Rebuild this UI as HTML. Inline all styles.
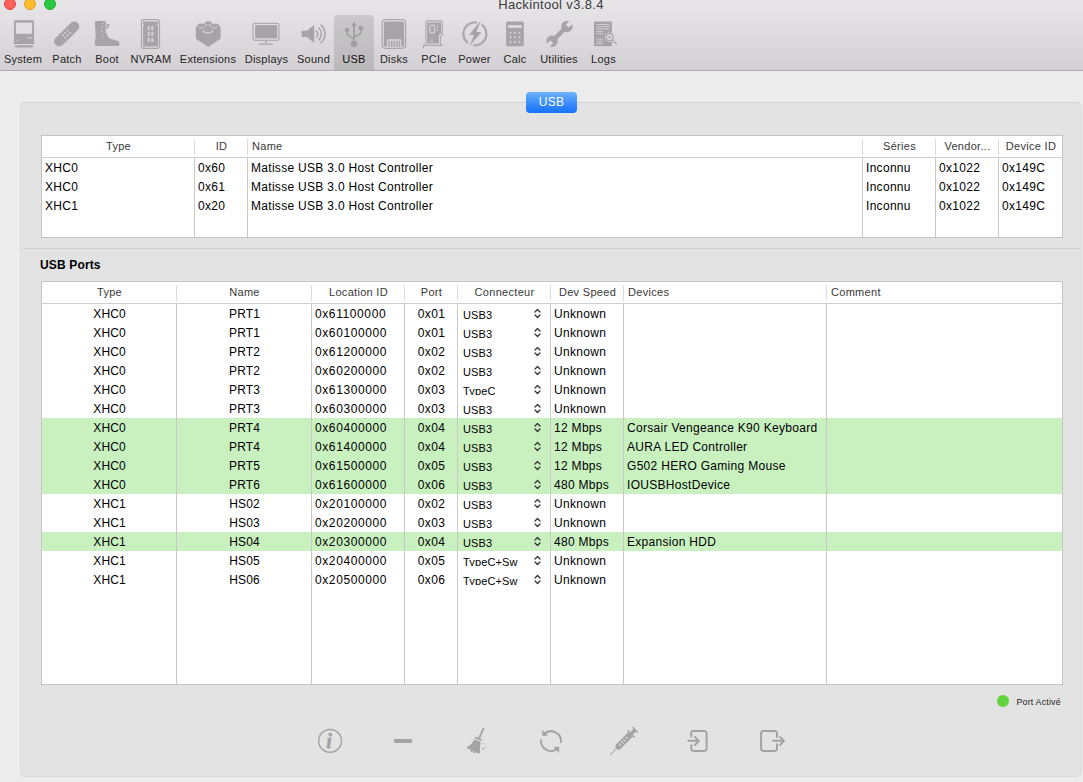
<!DOCTYPE html>
<html lang="fr"><head><meta charset="utf-8"><title>Hackintool v3.8.4</title>
<style>
html,body{margin:0;padding:0}
body{width:1083px;height:782px;overflow:hidden;background:#ececec;font-family:"Liberation Sans",sans-serif;position:relative;color:#000}
#toolbar{position:absolute;left:0;top:0;width:1083px;height:70px;background:linear-gradient(#e8e6e8,#d2d0d2);border-bottom:1px solid #acaaac}
.tl{position:absolute;top:-2px;width:12px;height:12px;border-radius:50%;box-sizing:border-box;border:0.5px solid}
#title{position:absolute;left:0;width:1102px;top:-3px;text-align:center;font-size:13px;line-height:16px;color:#3c3b3c;letter-spacing:0.35px}
.ti{position:absolute;top:15px;height:55px}
.ti svg{position:absolute;top:3px;left:50%;margin-left:-16px}
.tx{position:absolute;top:52px;width:80px;margin-left:-40px;text-align:center;font-size:11px;line-height:14px;color:#262526;letter-spacing:0.25px;white-space:nowrap}
.ti.sel{background:rgba(0,0,0,0.11);border-radius:4px 4px 0 0}
#box{position:absolute;left:20px;top:102px;width:1060px;height:673px;background:#e3e3e3;border:1px solid #dbdbdb;border-top-color:#d3d3d3;border-radius:5px}
#tab{position:absolute;left:526px;top:92px;width:51px;height:21px;border-radius:4px;background:linear-gradient(#6db2fb,#3d8ffa 50%,#1671fa);color:#fff;font-size:12px;line-height:20px;text-align:center;letter-spacing:0.2px}
.tbl{position:absolute;left:41px;width:1020px;background:#fff;border:1px solid #c4c4c4;overflow:hidden}
#t1{top:135px;height:101px}
#t2{top:281px;height:402px}
.hdr{position:absolute;left:0;top:0;width:100%;height:21px;border-bottom:1px solid #cfcfcf;background:#fff}
#t2 .hdr{height:21px}
.hc{position:absolute;top:0;height:21px;line-height:21px;font-size:11px;letter-spacing:0.3px;color:#383838;box-sizing:border-box}
.hc.hctr{text-align:center}
.hc.hlft{text-align:left;padding-left:4px}
.vl{position:absolute;top:22px;bottom:0;width:1px;background:#c8c8c8}
.hv{position:absolute;top:3px;height:16px;width:1px;background:#dcdcdc}
.row{position:absolute;left:0;width:100%;height:19px}
.row.g{background:#c9f1c0}
.c{position:absolute;top:1px;height:19px;line-height:19px;font-size:12px;letter-spacing:0.3px;white-space:nowrap;overflow:hidden}
.c.ctr{text-align:center;letter-spacing:0.1px}
.c.loc{letter-spacing:0.6px}
.c.prt{letter-spacing:0.35px}
.c.pop{font-size:11px;top:4px;height:11.3px;line-height:14px;letter-spacing:0.15px}
.chev{position:absolute;top:4px}
#sep{position:absolute;left:23px;top:248px;width:1057px;height:1px;background:#d0d0d0}
#lbl{position:absolute;left:40px;top:258px;font-size:12px;font-weight:bold;line-height:15px;letter-spacing:0.15px}
#legend{position:absolute;left:997px;top:695px;height:12px}
#legend .dot{position:absolute;left:0;top:0;width:12px;height:12px;border-radius:50%;background:#63d53c}
#legend .lt{position:absolute;left:19.5px;top:0.5px;font-size:8.8px;line-height:13px;white-space:nowrap;color:#222;letter-spacing:0.2px}
.bi{position:absolute}
</style></head>
<body>
<div id="toolbar">
<div class="tl" style="left:4px;background:#fd605a;border-color:#e2463f"></div><div class="tl" style="left:24px;background:#febc2e;border-color:#dfa123"></div><div class="tl" style="left:44px;background:#29c840;border-color:#1dad2b"></div>
<div id="title">Hackintool v3.8.4</div>
<div class="ti sel" style="left:334px;width:40px"></div>
<svg id="tbi" width="1083" height="70" viewBox="0 0 1083 70" style="position:absolute;left:0;top:0">
<defs>
<mask id="mw" maskUnits="userSpaceOnUse" x="540" y="15" width="40" height="40"><rect x="540" y="15" width="40" height="40" fill="#fff"/><g transform="rotate(-45 559.5 33.9)"><rect x="570.500" y="31.800" width="8" height="4.200" fill="#000"/><rect x="540.500" y="31.800" width="8" height="4.200" fill="#000"/></g></mask>
</defs>
<g fill="#a6a4a6" stroke="none">
<!-- System -->
<path fill-rule="evenodd" d="M15.5 20.2h17a1.5 1.5 0 0 1 1.5 1.5v22.3h-20v-22.3a1.5 1.5 0 0 1 1.5-1.5zM15.9 22.8v10.8h16.2v-10.8z"/>
<rect x="15.9" y="22.8" width="16.2" height="10.8" fill="#e1dfe1"/>
<rect x="27.4" y="37" width="4.3" height="1.7" fill="#c9c7c9"/><rect x="16.3" y="39.5" width="1.8" height="1.5" fill="#c9c7c9"/>
<rect x="15" y="45.2" width="18" height="2.3" rx="1"/>
<!-- Patch -->
<rect x="51" y="29" width="31.400" height="10" rx="5" transform="rotate(-45 66.700 34)"/>
<g fill="#dddbdd"><rect x="66.900" y="29.700" width="1.600" height="1.600"/><rect x="64.500" y="32.100" width="1.600" height="1.600"/><rect x="69.300" y="32.100" width="1.600" height="1.600"/><rect x="62.100" y="34.500" width="1.600" height="1.600"/><rect x="66.900" y="34.500" width="1.600" height="1.600"/><rect x="64.500" y="36.900" width="1.600" height="1.600"/></g>
<!-- Boot -->
<path d="M94.800 21.200q5.500-1 10.900 0l.2 2.800l-.5 5.800q.4 3.200 2.500 6.700q.9 1.700 2.300 2.300l4.900 1.300l2.700 .9q1.600 .8 1.600 2.500v1.500q-.2 .9-1.400 .9h-22q-1.100 0-1.100-1.300v-4.300q.1-1.300 .8-2l-.4-9.900z"/>
<path d="M106.800 23.700l2.900 .7q-.2 1-.9 1.800q-1.200 1.400-2 3.100l-.7-.9q.9-2.400 .7-4.700z"/>
<g fill="#cfcdcf"><rect x="102" y="23" width="1.600" height="1"/><rect x="101.400" y="25.900" width="1.500" height="1"/><rect x="101" y="28.400" width="1.500" height="1"/><rect x="101.100" y="31" width="1.500" height="1"/><rect x="101.700" y="33.500" width="1.300" height="1.100"/><rect x="102.800" y="36.200" width="1.200" height="1.100"/></g>
<!-- NVRAM -->
<rect x="141.5" y="19.6" width="18" height="28.7" rx="2.2" fill="none" stroke="#a9a7a9" stroke-width="1.2"/>
<path d="M143 21.600h15.200v2.200l-1.100 1.200l1 1.400v20.200h-15v-20.200l1-1.400l-1.100-1.200z"/>
<g fill="#d6d4d6"><rect x="147.700" y="26.200" width="2" height="4.200"/><rect x="151.300" y="26.200" width="2" height="4.200"/><rect x="147.700" y="32" width="2" height="3.800"/><rect x="151.300" y="32" width="2" height="3.800"/><rect x="147.700" y="37.800" width="2" height="4.200"/><rect x="151.300" y="37.800" width="2" height="4.200"/></g>
<!-- Extensions -->
<path d="M195.800 27.400q0-1 1.600-1.600q0-2.400 3.800-2.400q1.600 0 2.600 .5q.2-.4 .8-.6q0-2.100 3.600-2.100q3.600 0 3.600 2.100q.6 .2 .8 .6q1-.5 2.600-.5q3.800 0 3.800 2.400q1.600 .6 1.600 1.600v11.400l-12.400 8.200l-12.400-8.200z"/>
<g fill="none" stroke="#d6d4d6" stroke-width=".9"><path d="M197.700 26.200a3.500 1.700 0 0 0 7 0"/><path d="M210.700 26.200a3.500 1.700 0 0 0 7 0"/><path d="M204.800 23.700a3.400 1.600 0 0 0 6.800 0"/><path d="M203.300 30.300a4.600 2.700 0 0 0 9.200 0" stroke-width="1.200" stroke="#dad8da"/></g>
<!-- Displays -->
<rect x="253" y="23.300" width="26" height="17" rx="2" fill="none" stroke="#b1afb1" stroke-width="1.300"/>
<rect x="255.200" y="25.100" width="22" height="13.200"/>
<rect x="265" y="40.800" width="2" height="3.200" fill="#b1afb1"/><rect x="259.200" y="43.600" width="13.600" height="1.300" rx=".5" fill="#b1afb1"/>
<!-- Sound -->
<path d="M302.200 30.800h4.800l6.600-5.600q.6-.4.600.4v16.600q0 .8-.6.400l-6.600-5.600h-4.800q-.5 0-.5-.5v-5.200q0-.5.500-.5z"/>
<g fill="none" stroke="#a9a7a9" stroke-width="1.600" stroke-linecap="round"><path d="M316.300 30.800a4 4 0 0 1 0 6.200"/><path d="M318.700 28a7.800 7.800 0 0 1 0 11.800"/><path d="M321 25.200a11.500 11.500 0 0 1 0 17.400"/></g>
<!-- USB -->
<g fill="#a19fa1"><path d="M354 21.700l2.800 4.200h-1.900v14.500a3.500 3.500 0 1 1-1.800 0v-14.500h-1.900z"/><circle cx="347" cy="30" r="2.200"/><rect x="358.700" y="26" width="4.200" height="4.200"/></g>
<g fill="none" stroke="#a19fa1" stroke-width="1.600"><path d="M347.200 31v3.500l6.800 4.700"/><path d="M360.800 30v3l-6.800 4.500"/></g>
<!-- Disks -->
<rect x="382.200" y="19.700" width="23.400" height="28.600" rx="3.200" fill="none" stroke="#a9a7a9" stroke-width="1.200"/>
<path fill-rule="evenodd" d="M385.400 21.500h17.200a1.500 1.500 0 0 1 1.500 1.500v22.100a1.500 1.500 0 0 1-1.500 1.500h-17.200a1.500 1.500 0 0 1-1.500-1.500v-22.100a1.500 1.500 0 0 1 1.500-1.500z"/>
<path d="M387 46.600v-6.300a1 1 0 0 1 1-1h12.200a1 1 0 0 1 1 1v6.300z" fill="#d8d6d8"/>
<g><rect x="388.400" y="40.600" width="1.500" height="6"/><rect x="391" y="40.600" width="1.500" height="6"/><rect x="393.600" y="40.600" width="1.500" height="6"/><rect x="396.200" y="40.600" width="1.500" height="6"/><rect x="398.800" y="40.600" width="1.300" height="6"/></g>
<!-- PCIe -->
<path d="M425.900 45.400v-22.500a2 2 0 0 1 2-2h12.400a2 2 0 0 1 2 2v11.900q0 1.500-1.400 1.500q-.5 0-.5 1.100v8" fill="none" stroke="#a9a7a9" stroke-width="1.100"/>
<path d="M423.500 48.300v-2.100q0-.8 .8-.8h18.600" fill="none" stroke="#a9a7a9" stroke-width="1.100"/>
<path d="M428 22.600h12.300a.8 .8 0 0 1 .8 .8v10q0 .8-.8 .8q-1.500 0-1.500 1.700v7.700h-11.600v-20.200a.8 .8 0 0 1 .8-.8z"/>
<rect x="429.900" y="25.400" width="4.600" height="7.800" rx="1" fill="none" stroke="#d6d4d6" stroke-width="1.200"/>
<g fill="#d0ced0"><rect x="436.200" y="24.900" width="2" height=".9"/><rect x="436.200" y="27" width="2" height=".9"/><rect x="436.400" y="29.400" width="1.500" height="1.300"/><rect x="429.800" y="37.900" width="3" height=".9" fill="#bebcbe"/><rect x="429.800" y="40.700" width="3.200" height="1"/></g>
<!-- Power -->
<g fill="none" stroke="#a9a7a9" stroke-width="2.200"><path d="M481.800 24.700a11.500 11.500 0 0 1-8.500 20.600"/><path d="M468 43.100a11.500 11.500 0 0 1 8.700-20.600"/></g>
<path d="M480.800 20.600l-11.800 14.300h5.100l-4.800 11.700l12.100-14.600h-5z"/>
<!-- Calc -->
<rect x="506.100" y="21.600" width="17.700" height="24.600" rx="1.500"/>
<rect x="508.200" y="25.100" width="13.500" height="2.800" fill="#dcdadc"/>
<g fill="#d6d4d6"><rect x="509.600" y="32" width="1.800" height="1.800"/><rect x="514.100" y="32" width="1.800" height="1.800"/><rect x="518.600" y="32" width="1.800" height="1.800"/><rect x="509.600" y="36.400" width="1.800" height="1.800"/><rect x="514.100" y="36.400" width="1.800" height="1.800"/><rect x="518.600" y="36.400" width="1.800" height="1.800"/><rect x="509.600" y="40.900" width="1.800" height="1.800"/><rect x="514.100" y="40.900" width="1.800" height="1.800"/><rect x="518.600" y="40.900" width="1.800" height="1.800"/></g>
<!-- Utilities -->
<g mask="url(#mw)"><g transform="rotate(-45 559.500 33.900)"><rect x="549" y="31.700" width="21" height="4.400"/><circle cx="570" cy="33.900" r="5.700"/><circle cx="549" cy="33.900" r="5.700"/></g></g>
<!-- Logs -->
<rect x="594" y="21.600" width="17.900" height="24.600" rx="1"/>
<g fill="#cfcdcf"><rect x="596.500" y="24" width="13" height="1"/><rect x="596.500" y="26.200" width="13" height="1"/><rect x="596.500" y="28.400" width="13" height="1"/><rect x="596.500" y="31" width="6.500" height="1"/><rect x="596.500" y="33.200" width="6.500" height="1"/><rect x="596.500" y="38.600" width="6.500" height="1"/><rect x="596.500" y="40.800" width="6.500" height="1"/><rect x="596.500" y="43" width="6.500" height="1"/></g>
<circle cx="609.800" cy="37.200" r="4.800" fill="#dad8da"/>
<circle cx="609.800" cy="37.200" r="3.500" fill="none" stroke="#a9a7a9" stroke-width="1.200"/><circle cx="609.800" cy="37.200" r="1.400" fill="#b5b3b5"/>
<path d="M612.400 39.900l4 3.800" stroke="#a9a7a9" stroke-width="1.300" fill="none" stroke-linecap="round"/>
</g>
</svg>
<div class="tx" style="left:23px">System</div><div class="tx" style="left:67px">Patch</div><div class="tx" style="left:107px">Boot</div><div class="tx" style="left:151px">NVRAM</div><div class="tx" style="left:208px">Extensions</div><div class="tx" style="left:266.500px">Displays</div><div class="tx" style="left:313.500px">Sound</div><div class="tx" style="left:354px;color:#111">USB</div><div class="tx" style="left:394px">Disks</div><div class="tx" style="left:434px">PCIe</div><div class="tx" style="left:474.500px">Power</div><div class="tx" style="left:515px">Calc</div><div class="tx" style="left:559px">Utilities</div><div class="tx" style="left:603.500px">Logs</div>
</div>
<div id="box"></div>
<div id="tab">USB</div>
<div class="tbl" id="t1">
<div class="hdr"><span class="hc hctr" style="left:0px;width:153px">Type</span><span class="hc hctr" style="left:153px;width:53px">ID</span><span class="hc hlft" style="left:206px;width:615px">Name</span><span class="hc hctr" style="left:821px;width:73px">Séries</span><span class="hc hctr" style="left:894px;width:63px">Vendor...</span><span class="hc hctr" style="left:957px;width:64px">Device ID</span></div>
<i class="vl" style="left:152px"></i><i class="hv" style="left:152px"></i><i class="vl" style="left:205px"></i><i class="hv" style="left:205px"></i><i class="vl" style="left:820px"></i><i class="hv" style="left:820px"></i><i class="vl" style="left:893px"></i><i class="hv" style="left:893px"></i><i class="vl" style="left:956px"></i><i class="hv" style="left:956px"></i>
<div class="row" style="top:22px"><span class="c" style="left:3px;width:149px">XHC0</span><span class="c" style="left:156px;width:49px">0x60</span><span class="c" style="left:209px;width:611px">Matisse USB 3.0 Host Controller</span><span class="c" style="left:824px;width:69px">Inconnu</span><span class="c" style="left:897px;width:59px">0x1022</span><span class="c" style="left:960px;width:60px">0x149C</span></div>
<div class="row" style="top:41px"><span class="c" style="left:3px;width:149px">XHC0</span><span class="c" style="left:156px;width:49px">0x61</span><span class="c" style="left:209px;width:611px">Matisse USB 3.0 Host Controller</span><span class="c" style="left:824px;width:69px">Inconnu</span><span class="c" style="left:897px;width:59px">0x1022</span><span class="c" style="left:960px;width:60px">0x149C</span></div>
<div class="row" style="top:60px"><span class="c" style="left:3px;width:149px">XHC1</span><span class="c" style="left:156px;width:49px">0x20</span><span class="c" style="left:209px;width:611px">Matisse USB 3.0 Host Controller</span><span class="c" style="left:824px;width:69px">Inconnu</span><span class="c" style="left:897px;width:59px">0x1022</span><span class="c" style="left:960px;width:60px">0x149C</span></div>
</div>
<div id="sep"></div>
<div id="lbl">USB Ports</div>
<div class="tbl" id="t2">
<div class="hdr"><span class="hc hctr" style="left:0px;width:135px">Type</span><span class="hc hctr" style="left:135px;width:135px">Name</span><span class="hc hctr" style="left:270px;width:93px">Location ID</span><span class="hc hctr" style="left:363px;width:53px">Port</span><span class="hc hctr" style="left:416px;width:93px">Connecteur</span><span class="hc hctr" style="left:509px;width:73px">Dev Speed</span><span class="hc hlft" style="left:582px;width:203px">Devices</span><span class="hc hlft" style="left:785px;width:236px">Comment</span></div>
<div class="row" style="top:22px"><span class="c ctr" style="left:0px;width:135px">XHC0</span><span class="c ctr" style="left:135px;width:135px">PRT1</span><span class="c loc" style="left:273px;width:89px">0x61100000</span><span class="c ctr prt" style="left:363px;width:53px">0x01</span><span class="c pop" style="left:421px;width:70px">USB3</span><svg class="chev" style="left:492px" width="7" height="11" viewBox="0 0 7 11"><path d="M1 4 L3.5 1.5 L6 4 M1 7 L3.5 9.5 L6 7" fill="none" stroke="#333" stroke-width="1.25" stroke-linecap="round" stroke-linejoin="round"/></svg><span class="c" style="left:512px;width:69px">Unknown</span></div>
<div class="row" style="top:41px"><span class="c ctr" style="left:0px;width:135px">XHC0</span><span class="c ctr" style="left:135px;width:135px">PRT1</span><span class="c loc" style="left:273px;width:89px">0x60100000</span><span class="c ctr prt" style="left:363px;width:53px">0x01</span><span class="c pop" style="left:421px;width:70px">USB3</span><svg class="chev" style="left:492px" width="7" height="11" viewBox="0 0 7 11"><path d="M1 4 L3.5 1.5 L6 4 M1 7 L3.5 9.5 L6 7" fill="none" stroke="#333" stroke-width="1.25" stroke-linecap="round" stroke-linejoin="round"/></svg><span class="c" style="left:512px;width:69px">Unknown</span></div>
<div class="row" style="top:60px"><span class="c ctr" style="left:0px;width:135px">XHC0</span><span class="c ctr" style="left:135px;width:135px">PRT2</span><span class="c loc" style="left:273px;width:89px">0x61200000</span><span class="c ctr prt" style="left:363px;width:53px">0x02</span><span class="c pop" style="left:421px;width:70px">USB3</span><svg class="chev" style="left:492px" width="7" height="11" viewBox="0 0 7 11"><path d="M1 4 L3.5 1.5 L6 4 M1 7 L3.5 9.5 L6 7" fill="none" stroke="#333" stroke-width="1.25" stroke-linecap="round" stroke-linejoin="round"/></svg><span class="c" style="left:512px;width:69px">Unknown</span></div>
<div class="row" style="top:79px"><span class="c ctr" style="left:0px;width:135px">XHC0</span><span class="c ctr" style="left:135px;width:135px">PRT2</span><span class="c loc" style="left:273px;width:89px">0x60200000</span><span class="c ctr prt" style="left:363px;width:53px">0x02</span><span class="c pop" style="left:421px;width:70px">USB3</span><svg class="chev" style="left:492px" width="7" height="11" viewBox="0 0 7 11"><path d="M1 4 L3.5 1.5 L6 4 M1 7 L3.5 9.5 L6 7" fill="none" stroke="#333" stroke-width="1.25" stroke-linecap="round" stroke-linejoin="round"/></svg><span class="c" style="left:512px;width:69px">Unknown</span></div>
<div class="row" style="top:98px"><span class="c ctr" style="left:0px;width:135px">XHC0</span><span class="c ctr" style="left:135px;width:135px">PRT3</span><span class="c loc" style="left:273px;width:89px">0x61300000</span><span class="c ctr prt" style="left:363px;width:53px">0x03</span><span class="c pop" style="left:421px;width:70px">TypeC</span><svg class="chev" style="left:492px" width="7" height="11" viewBox="0 0 7 11"><path d="M1 4 L3.5 1.5 L6 4 M1 7 L3.5 9.5 L6 7" fill="none" stroke="#333" stroke-width="1.25" stroke-linecap="round" stroke-linejoin="round"/></svg><span class="c" style="left:512px;width:69px">Unknown</span></div>
<div class="row" style="top:117px"><span class="c ctr" style="left:0px;width:135px">XHC0</span><span class="c ctr" style="left:135px;width:135px">PRT3</span><span class="c loc" style="left:273px;width:89px">0x60300000</span><span class="c ctr prt" style="left:363px;width:53px">0x03</span><span class="c pop" style="left:421px;width:70px">USB3</span><svg class="chev" style="left:492px" width="7" height="11" viewBox="0 0 7 11"><path d="M1 4 L3.5 1.5 L6 4 M1 7 L3.5 9.5 L6 7" fill="none" stroke="#333" stroke-width="1.25" stroke-linecap="round" stroke-linejoin="round"/></svg><span class="c" style="left:512px;width:69px">Unknown</span></div>
<div class="row g" style="top:136px"><span class="c ctr" style="left:0px;width:135px">XHC0</span><span class="c ctr" style="left:135px;width:135px">PRT4</span><span class="c loc" style="left:273px;width:89px">0x60400000</span><span class="c ctr prt" style="left:363px;width:53px">0x04</span><span class="c pop" style="left:421px;width:70px">USB3</span><svg class="chev" style="left:492px" width="7" height="11" viewBox="0 0 7 11"><path d="M1 4 L3.5 1.5 L6 4 M1 7 L3.5 9.5 L6 7" fill="none" stroke="#333" stroke-width="1.25" stroke-linecap="round" stroke-linejoin="round"/></svg><span class="c" style="left:512px;width:69px">12 Mbps</span><span class="c" style="left:585px;width:199px">Corsair Vengeance K90 Keyboard</span></div>
<div class="row g" style="top:155px"><span class="c ctr" style="left:0px;width:135px">XHC0</span><span class="c ctr" style="left:135px;width:135px">PRT4</span><span class="c loc" style="left:273px;width:89px">0x61400000</span><span class="c ctr prt" style="left:363px;width:53px">0x04</span><span class="c pop" style="left:421px;width:70px">USB3</span><svg class="chev" style="left:492px" width="7" height="11" viewBox="0 0 7 11"><path d="M1 4 L3.5 1.5 L6 4 M1 7 L3.5 9.5 L6 7" fill="none" stroke="#333" stroke-width="1.25" stroke-linecap="round" stroke-linejoin="round"/></svg><span class="c" style="left:512px;width:69px">12 Mbps</span><span class="c" style="left:585px;width:199px">AURA LED Controller</span></div>
<div class="row g" style="top:174px"><span class="c ctr" style="left:0px;width:135px">XHC0</span><span class="c ctr" style="left:135px;width:135px">PRT5</span><span class="c loc" style="left:273px;width:89px">0x61500000</span><span class="c ctr prt" style="left:363px;width:53px">0x05</span><span class="c pop" style="left:421px;width:70px">USB3</span><svg class="chev" style="left:492px" width="7" height="11" viewBox="0 0 7 11"><path d="M1 4 L3.5 1.5 L6 4 M1 7 L3.5 9.5 L6 7" fill="none" stroke="#333" stroke-width="1.25" stroke-linecap="round" stroke-linejoin="round"/></svg><span class="c" style="left:512px;width:69px">12 Mbps</span><span class="c" style="left:585px;width:199px">G502 HERO Gaming Mouse</span></div>
<div class="row g" style="top:193px"><span class="c ctr" style="left:0px;width:135px">XHC0</span><span class="c ctr" style="left:135px;width:135px">PRT6</span><span class="c loc" style="left:273px;width:89px">0x61600000</span><span class="c ctr prt" style="left:363px;width:53px">0x06</span><span class="c pop" style="left:421px;width:70px">USB3</span><svg class="chev" style="left:492px" width="7" height="11" viewBox="0 0 7 11"><path d="M1 4 L3.5 1.5 L6 4 M1 7 L3.5 9.5 L6 7" fill="none" stroke="#333" stroke-width="1.25" stroke-linecap="round" stroke-linejoin="round"/></svg><span class="c" style="left:512px;width:69px">480 Mbps</span><span class="c" style="left:585px;width:199px">IOUSBHostDevice</span></div>
<div class="row" style="top:212px"><span class="c ctr" style="left:0px;width:135px">XHC1</span><span class="c ctr" style="left:135px;width:135px">HS02</span><span class="c loc" style="left:273px;width:89px">0x20100000</span><span class="c ctr prt" style="left:363px;width:53px">0x02</span><span class="c pop" style="left:421px;width:70px">USB3</span><svg class="chev" style="left:492px" width="7" height="11" viewBox="0 0 7 11"><path d="M1 4 L3.5 1.5 L6 4 M1 7 L3.5 9.5 L6 7" fill="none" stroke="#333" stroke-width="1.25" stroke-linecap="round" stroke-linejoin="round"/></svg><span class="c" style="left:512px;width:69px">Unknown</span></div>
<div class="row" style="top:231px"><span class="c ctr" style="left:0px;width:135px">XHC1</span><span class="c ctr" style="left:135px;width:135px">HS03</span><span class="c loc" style="left:273px;width:89px">0x20200000</span><span class="c ctr prt" style="left:363px;width:53px">0x03</span><span class="c pop" style="left:421px;width:70px">USB3</span><svg class="chev" style="left:492px" width="7" height="11" viewBox="0 0 7 11"><path d="M1 4 L3.5 1.5 L6 4 M1 7 L3.5 9.5 L6 7" fill="none" stroke="#333" stroke-width="1.25" stroke-linecap="round" stroke-linejoin="round"/></svg><span class="c" style="left:512px;width:69px">Unknown</span></div>
<div class="row g" style="top:250px"><span class="c ctr" style="left:0px;width:135px">XHC1</span><span class="c ctr" style="left:135px;width:135px">HS04</span><span class="c loc" style="left:273px;width:89px">0x20300000</span><span class="c ctr prt" style="left:363px;width:53px">0x04</span><span class="c pop" style="left:421px;width:70px">USB3</span><svg class="chev" style="left:492px" width="7" height="11" viewBox="0 0 7 11"><path d="M1 4 L3.5 1.5 L6 4 M1 7 L3.5 9.5 L6 7" fill="none" stroke="#333" stroke-width="1.25" stroke-linecap="round" stroke-linejoin="round"/></svg><span class="c" style="left:512px;width:69px">480 Mbps</span><span class="c" style="left:585px;width:199px">Expansion HDD</span></div>
<div class="row" style="top:269px"><span class="c ctr" style="left:0px;width:135px">XHC1</span><span class="c ctr" style="left:135px;width:135px">HS05</span><span class="c loc" style="left:273px;width:89px">0x20400000</span><span class="c ctr prt" style="left:363px;width:53px">0x05</span><span class="c pop" style="left:421px;width:70px">TypeC+Sw</span><svg class="chev" style="left:492px" width="7" height="11" viewBox="0 0 7 11"><path d="M1 4 L3.5 1.5 L6 4 M1 7 L3.5 9.5 L6 7" fill="none" stroke="#333" stroke-width="1.25" stroke-linecap="round" stroke-linejoin="round"/></svg><span class="c" style="left:512px;width:69px">Unknown</span></div>
<div class="row" style="top:288px"><span class="c ctr" style="left:0px;width:135px">XHC1</span><span class="c ctr" style="left:135px;width:135px">HS06</span><span class="c loc" style="left:273px;width:89px">0x20500000</span><span class="c ctr prt" style="left:363px;width:53px">0x06</span><span class="c pop" style="left:421px;width:70px">TypeC+Sw</span><svg class="chev" style="left:492px" width="7" height="11" viewBox="0 0 7 11"><path d="M1 4 L3.5 1.5 L6 4 M1 7 L3.5 9.5 L6 7" fill="none" stroke="#333" stroke-width="1.25" stroke-linecap="round" stroke-linejoin="round"/></svg><span class="c" style="left:512px;width:69px">Unknown</span></div>
<i class="vl" style="left:134px"></i><i class="hv" style="left:134px"></i><i class="vl" style="left:269px"></i><i class="hv" style="left:269px"></i><i class="vl" style="left:362px"></i><i class="hv" style="left:362px"></i><i class="vl" style="left:415px"></i><i class="hv" style="left:415px"></i><i class="vl" style="left:508px"></i><i class="hv" style="left:508px"></i><i class="vl" style="left:581px"></i><i class="hv" style="left:581px"></i><i class="vl" style="left:784px"></i><i class="hv" style="left:784px"></i>
</div>
<div id="legend"><span class="dot"></span><span class="lt">Port Activé</span></div>
<svg id="bti" width="1083" height="50" viewBox="0 720 1083 50" style="position:absolute;left:0;top:720px">
<g fill="none" stroke="#a3a3a3" stroke-linecap="round" stroke-linejoin="round">
<!-- info -->
<circle cx="330.050" cy="740.900" r="11.400" stroke-width="1.400"/>
<!-- refresh -->
<path d="M544 734.200A10 10 0 0 1 560.900 742.800" stroke-width="2" stroke-linecap="butt"/>
<path d="M541.200 739.300A10 10 0 0 0 558.200 748" stroke-width="2" stroke-linecap="butt"/>
<!-- import -->
<path d="M691.300 736.400v-3a2.300 2.300 0 0 1 2.300-2.300h10.700a2.300 2.300 0 0 1 2.300 2.300v15.200a2.300 2.300 0 0 1-2.300 2.300h-10.700a2.300 2.300 0 0 1-2.300-2.300v-3.300" stroke-width="2"/>
<path d="M688.200 740.800h10.200M694.900 736.800l4 4l-4 4.200" stroke-width="1.900"/>
<!-- export -->
<path d="M777 737v-3.600a2.300 2.300 0 0 0-2.300-2.300h-11.300a2.300 2.300 0 0 0-2.300 2.300v15.200a2.300 2.300 0 0 0 2.300 2.300h11.300a2.300 2.300 0 0 0 2.300-2.300v-4.400" stroke-width="2"/>
<path d="M773 740.800h10.500M780 736.800l4 4l-4 4.200" stroke-width="1.900"/>
<!-- broom handle -->
<path d="M483.400 728.600l-4 8.800" stroke-width="1.800"/>
</g>
<g fill="#a3a3a3" stroke="none">
<!-- minus -->
<rect x="394" y="739" width="18" height="3.900" rx="1"/>
<!-- refresh heads -->
<path d="M542.300 729.800v6h5.600z"/><path d="M559.200 752.900v-6.100h-5.700z"/>
<!-- broom -->
<path d="M475.700 736.500l6.300 2.800l-.8 1.800l-6.300-2.800z"/>
<path d="M474.400 739.300l6.200 2.800q-1 5.900-.5 11l-3.100.2l.1-2.300l-1.400 2.100l-2.900-.5l1-2.400l-2.200 1.700l-1.800-1.300l1.500-2l-2.700 1l-2-2q5-2.600 7.800-8.300z"/>
<circle cx="483.200" cy="743.300" r=".6"/><circle cx="483" cy="748.800" r="1"/><circle cx="485.500" cy="747.200" r=".6"/>
<!-- syringe -->
<g transform="translate(610.300 754.700) rotate(-45)">
<rect x="0" y="-.5" width="9.500" height="1"/>
<path d="M8.600-1.300l2-1.800h18.600v6.200h-18.600l-2-1.800z"/>
<rect x="28.800" y="-5.200" width="1.400" height="10.400" rx=".5"/>
<rect x="30" y="-1.700" width="5" height="3.400"/>
<rect x="34.400" y="-3.800" width="1.500" height="7.600" rx=".5"/>
<g fill="#e0e0e0"><rect x="13.200" y="-1.800" width="1.100" height="3.200"/><rect x="16.500" y="-1.800" width="1.100" height="3.200"/><rect x="19.800" y="-1.800" width="1.100" height="3.200"/><rect x="23.100" y="-1.800" width="1.100" height="3.200"/></g>
</g>
</g>
<text x="326.300" y="748.400" font-family="'Liberation Serif',serif" font-style="italic" font-weight="bold" font-size="20" fill="#a3a3a3" stroke="#a3a3a3" stroke-width=".5">i</text>
</svg>
</body></html>
